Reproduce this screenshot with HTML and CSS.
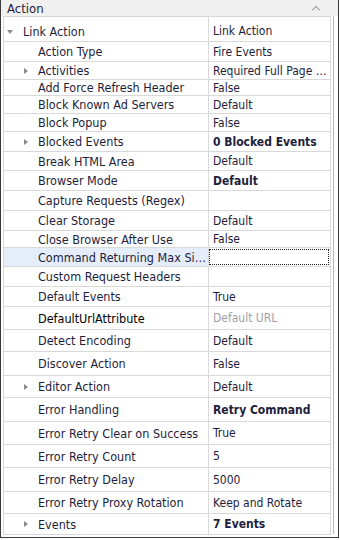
FILE: index.html
```html
<!DOCTYPE html>
<html lang="en">
<head>
    <meta charset="UTF-8">
    <title>Action</title>
    <link rel="stylesheet" href="styles.css">
</head>
<body>
    <div class="frame">
        <div class="title">
            <span>Action</span>
            <span class="collapse"></span>
        </div>
        <div class="panel">
            <div class="grid">
                <div class="name top"><span class="exp open"></span>Link Action</div>
                <div class="val top">Link Action</div>

                <div class="name">Action Type</div>
                <div class="val">Fire Events</div>

                <div class="name"><span class="exp"></span>Activities</div>
                <div class="val"><span class="clip">Required Full Page Load</span></div>

                <div class="name">Add Force Refresh Header</div>
                <div class="val">False</div>

                <div class="name">Block Known Ad Servers</div>
                <div class="val">Default</div>

                <div class="name">Block Popup</div>
                <div class="val">False</div>

                <div class="name"><span class="exp"></span>Blocked Events</div>
                <div class="val bold">0 Blocked Events</div>

                <div class="name">Break HTML Area</div>
                <div class="val">Default</div>

                <div class="name">Browser Mode</div>
                <div class="val bold">Default</div>

                <div class="name">Capture Requests (Regex)</div>
                <div class="val"></div>

                <div class="name">Clear Storage</div>
                <div class="val">Default</div>

                <div class="name">Close Browser After Use</div>
                <div class="val">False</div>

                <div class="name selected"><span class="clip">Command Returning Max Size</span></div>
                <div class="val focus"><span class="focus-box"></span></div>

                <div class="name">Custom Request Headers</div>
                <div class="val"></div>

                <div class="name">Default Events</div>
                <div class="val">True</div>

                <div class="name black">DefaultUrlAttribute</div>
                <div class="val muted">Default URL</div>

                <div class="name">Detect Encoding</div>
                <div class="val">Default</div>

                <div class="name">Discover Action</div>
                <div class="val">False</div>

                <div class="name"><span class="exp"></span>Editor Action</div>
                <div class="val">Default</div>

                <div class="name">Error Handling</div>
                <div class="val bold">Retry Command</div>

                <div class="name">Error Retry Clear on Success</div>
                <div class="val">True</div>

                <div class="name">Error Retry Count</div>
                <div class="val">5</div>

                <div class="name">Error Retry Delay</div>
                <div class="val">5000</div>

                <div class="name">Error Retry Proxy Rotation</div>
                <div class="val">Keep and Rotate</div>

                <div class="name"><span class="exp"></span>Events</div>
                <div class="val bold">7 Events</div>
            </div>
            <div class="scroll"></div>
        </div>
    </div>
</body>
</html>
```

FILE: styles.css
```css
body {
    margin: 0;
    background: #ffffff;
    font-family: "DejaVu Sans Condensed", "DejaVu Sans", sans-serif;
    font-size: 12px;
    color: #1e1e3c;
}
.frame {
    width: 337px;
    height: 537px;
    border-left: 1px solid #3a3a3a;
    border-right: 1px solid #3a3a3a;
    border-bottom: 1px solid #3a3a3a;
    overflow: hidden;
}
.title {
    height: 16px;
    background: #f0f0f0;
    display: flex;
    align-items: center;
    justify-content: space-between;
    padding: 0 19px 0 6px;
    font-size: 13px;
}
.collapse {
    width: 5px;
    height: 5px;
    border-left: 1.5px solid #a0a0a0;
    border-top: 1.5px solid #a0a0a0;
    transform: translateY(2px) rotate(45deg);
}
.panel {
    display: flex;
    padding-left: 2px;
}
.grid {
    display: grid;
    grid-template-columns: 205px 122px;
    grid-template-rows: 25px 20px 18px 16px 18px 18px 20px 19px 20px 20px 20px 17px 19px 20px 20px 23px 22px 24px 22px 24px 23px 23px 24px 22px 21px;
    border-left: 1px solid #d6d6d6;
    border-top: 1px solid #d6d6d6;
}
.name, .val {
    box-sizing: border-box;
    border-bottom: 1px solid #d9d9d9;
    border-right: 1px solid #d9d9d9;
    display: flex;
    align-items: center;
    white-space: nowrap;
    overflow: hidden;
    min-width: 0;
}
.name {
    padding-left: 34px;
    padding-right: 2px;
    font-size: 12.5px;
    position: relative;
}
.val {
    padding-left: 4px;
    padding-right: 3px;
}
.name.top {
    padding-left: 19px;
}
.top {
    padding-top: 4px;
}
.clip {
    overflow: hidden;
    text-overflow: ellipsis;
    min-width: 0;
}
.exp {
    position: absolute;
    left: 20px;
    top: 50%;
    margin-top: -3px;
    width: 0;
    height: 0;
    border-left: 4px solid #8a8a8a;
    border-top: 3px solid transparent;
    border-bottom: 3px solid transparent;
}
.exp.open {
    left: 3px;
    margin-top: 1px;
    border-left: 3px solid transparent;
    border-right: 3px solid transparent;
    border-top: 4px solid #8a8a8a;
    border-bottom: 0;
}
.bold {
    font-weight: bold;
}
.muted {
    color: #a0a0a8;
}
.black {
    color: #000000;
}
.selected {
    background: #e5edfb;
}
.focus {
    padding: 1px 1px 1px 0;
    align-items: stretch;
}
.focus-box {
    flex: 1;
    border: 1px dotted #202020;
}
.scroll {
    width: 3px;
    margin-left: 2px;
    border-left: 1px solid #b8b8b8;
    height: 518px;
}
```
